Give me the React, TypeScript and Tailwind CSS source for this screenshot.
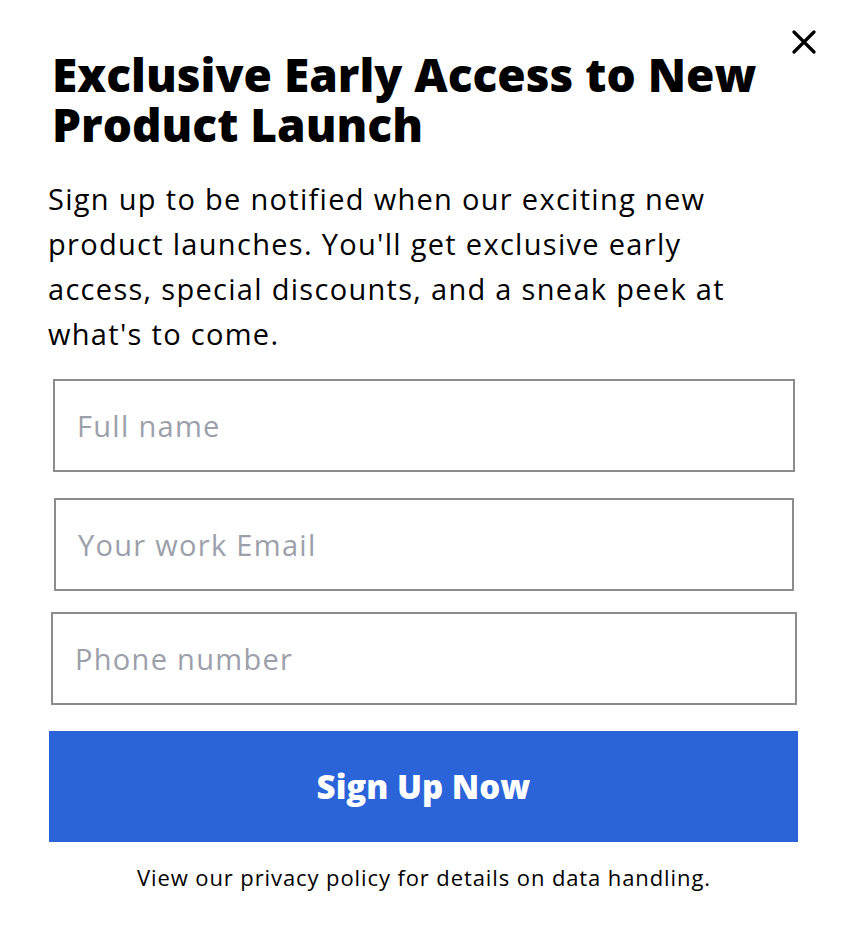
import React, { useState } from 'react';

const font = { fontFamily: '"Open Sans", "Liberation Sans", sans-serif' };

const fields = [
    { placeholder: 'Full name', type: 'text', className: 'mt-[23px] ml-[53px] w-[742px]' },
    { placeholder: 'Your work Email', type: 'email', className: 'mt-[26px] ml-[54px] w-[740px]' },
    { placeholder: 'Phone number', type: 'tel', className: 'mt-[21px] ml-[51px] w-[746px]' },
];

const App: React.FC = () => {
    const [values, setValues] = useState<Record<string, string>>({});

    return (
        <div className="relative w-[846px] h-[946px] bg-white text-black overflow-hidden" style={font}>
            {/* Close */}
            <button className="absolute right-[30px] top-[30px] w-[24px] h-[24px] flex items-center justify-center" aria-label="Close">
                <svg width="24" height="24" viewBox="0 0 24 24" fill="none" stroke="black" strokeWidth="3.2" strokeLinecap="round">
                    <path d="M2 2 L22 22 M22 2 L2 22" />
                </svg>
            </button>

            <div className="flex flex-col pt-[49px]">
                <h1 className="ml-[52px] text-[46px] leading-[50px] font-extrabold whitespace-nowrap">
                    <span className="block">Exclusive Early Access to New</span>
                    <span className="block">Product Launch</span>
                </h1>

                <p className="ml-[48px] mt-[27px] text-[29px] leading-[45px] tracking-[1.3px] whitespace-nowrap">
                    <span className="block">Sign up to be notified when our exciting new</span>
                    <span className="block">product launches. You'll get exclusive early</span>
                    <span className="block">access, special discounts, and a sneak peek at</span>
                    <span className="block">what's to come.</span>
                </p>

                <form className="flex flex-col" onSubmit={(e) => e.preventDefault()}>
                    {fields.map((f) => (
                        <input
                            key={f.placeholder}
                            type={f.type}
                            placeholder={f.placeholder}
                            value={values[f.placeholder] || ''}
                            onChange={(e) => setValues({ ...values, [f.placeholder]: e.target.value })}
                            className={`${f.className} h-[93px] border-2 border-[#8c8c8c] px-[22px] text-[29px] tracking-[1.3px] text-black placeholder-[#9ca0ab] outline-none`}
                            style={font}
                        />
                    ))}

                    <button
                        type="submit"
                        className="mt-[26px] ml-[49px] w-[749px] h-[111px] bg-[#2b63d9] text-white text-[33px] font-extrabold flex items-center justify-center"
                        style={font}
                    >
                        Sign Up Now
                    </button>
                </form>

                <p className="mt-[20px] text-center text-[22px] leading-[30px] tracking-[0.9px] pl-[2px]">
                    View our privacy policy for details on data handling.
                </p>
            </div>
        </div>
    );
};

export default App;
